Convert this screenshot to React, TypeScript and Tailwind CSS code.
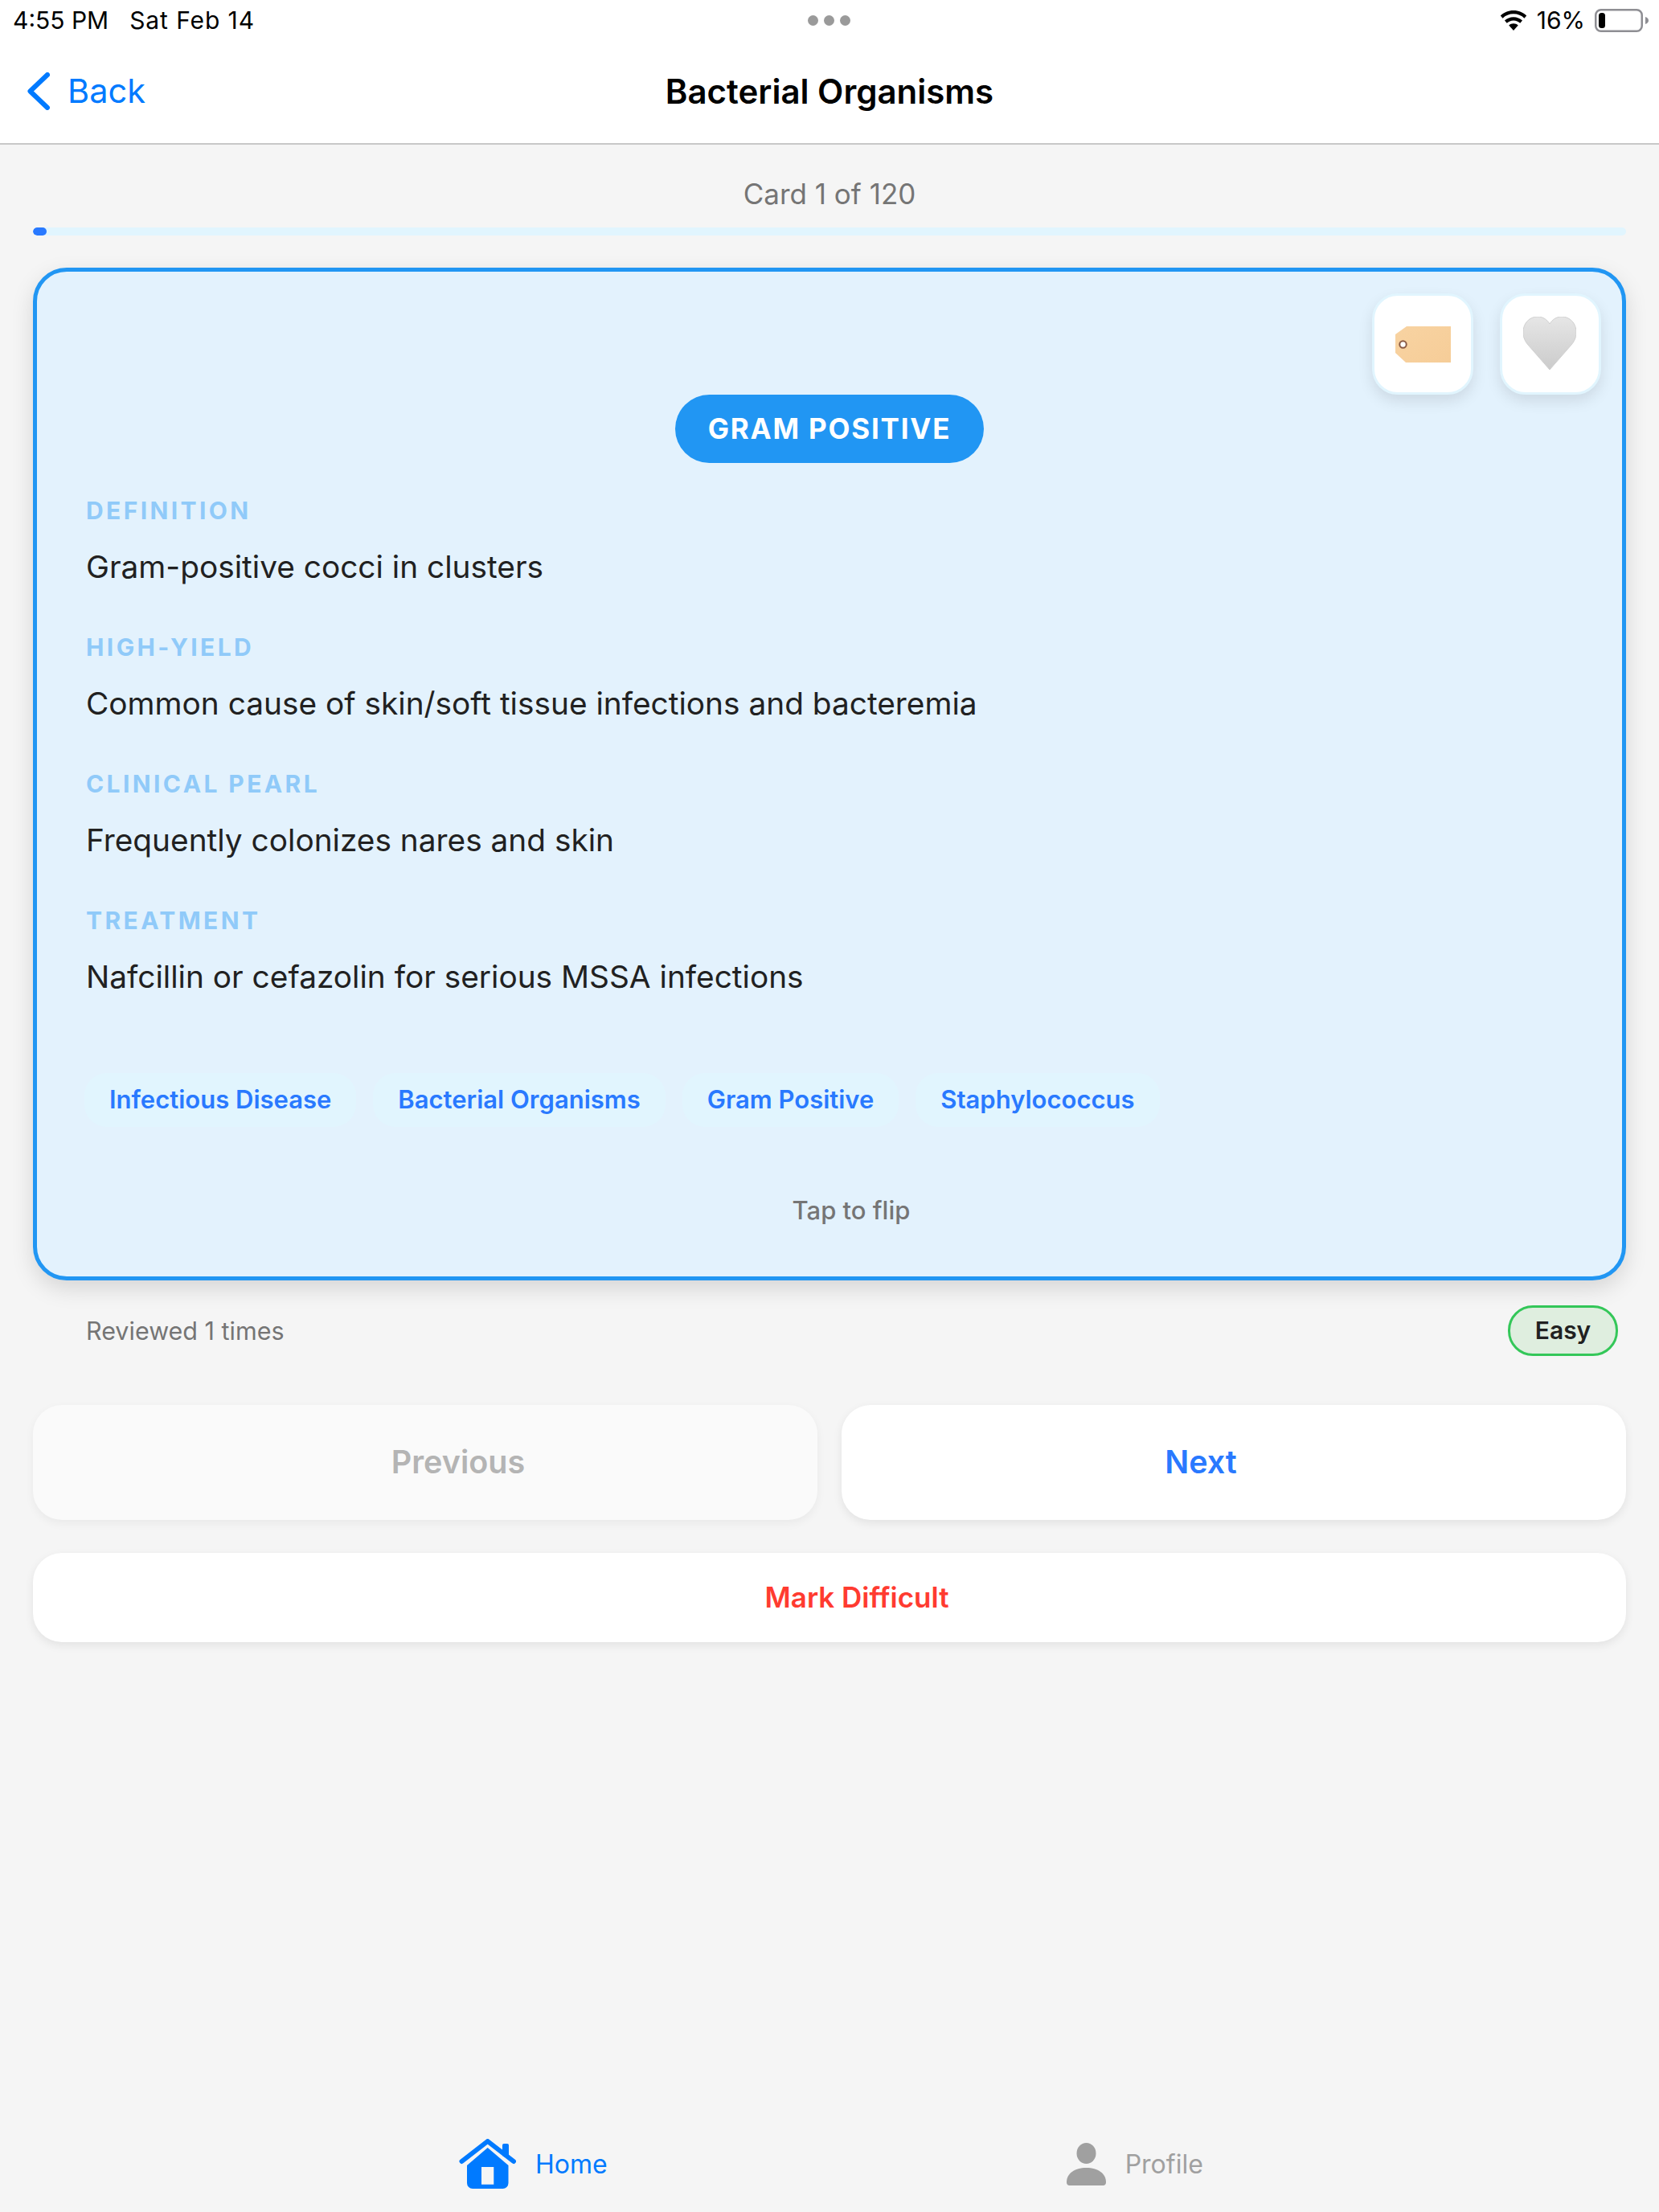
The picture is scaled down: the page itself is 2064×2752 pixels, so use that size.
function Chevron() {
  return (
    <svg width="28" height="47" viewBox="0 0 28 47" fill="none">
      <path d="M25 3 L3.500 23.500 L25 44" stroke="#007aff" strokeWidth="6" strokeLinecap="round" strokeLinejoin="round" />
    </svg>
  );
}

function Wifi() {
  return (
    <svg width="34" height="25" viewBox="0 0 36 27" fill="#000">
      <path d="M18 0C11 0 5 2.700 0.500 7l3 3.400C7.200 6.800 12.300 4.600 18 4.600s10.800 2.200 14.500 5.800l3-3.400C31 2.700 25 0 18 0z" />
      <path d="M18 8.800c-4.600 0-8.800 1.800-11.900 4.700l3 3.400c2.300-2.100 5.500-3.500 8.900-3.500s6.600 1.400 8.900 3.500l3-3.400C26.800 10.600 22.600 8.800 18 8.800z" />
      <path d="M18 17.500c-2.400 0-4.600 0.900-6.200 2.400L18 27l6.200-7.100c-1.600-1.500-3.800-2.400-6.200-2.400z" />
    </svg>
  );
}

function Battery() {
  return (
    <svg width="67" height="29" viewBox="0 0 67 29" fill="none">
      <rect x="1.250" y="1.250" width="57.500" height="26.500" rx="6.500" stroke="#8e8e93" strokeWidth="2.500" />
      <rect x="5" y="5" width="8" height="19" rx="3.500" fill="#000" />
      <path d="M63 10c2.500 0.800 4 2.500 4 4.500s-1.500 3.700-4 4.500z" fill="#8e8e93" />
    </svg>
  );
}

function TagIcon() {
  return (
    <svg width="69" height="45" viewBox="0 0 69 45">
      <defs>
        <linearGradient id="tagFill" x1="0" y1="0" x2="1" y2="1">
          <stop offset="0" stopColor="#f8d3a2" />
          <stop offset="1" stopColor="#f6cd98" />
        </linearGradient>
      </defs>
      <path d="M14 0H69V45H13L0 33V10z" fill="url(#tagFill)" />
      <circle cx="9.500" cy="22.500" r="4.200" fill="#fff" stroke="#8a5a44" strokeWidth="2" />
    </svg>
  );
}

function HeartIcon() {
  return (
    <svg width="66" height="66" viewBox="0 0 66 66">
      <defs>
        <linearGradient id="heartFill" x1="0" y1="0" x2="0" y2="1">
          <stop offset="0" stopColor="#e6e6e6" />
          <stop offset="1" stopColor="#cbcbcb" />
        </linearGradient>
      </defs>
      <path
        d="M33 66 L6 35 C1 29 0 24 0 19 C0 8 8 0 18 0 C25 0 30 4 33 9 C36 4 41 0 48 0 C58 0 66 8 66 19 C66 24 65 29 60 35 Z"
        fill="url(#heartFill)"
        stroke="#d0d0d0"
        strokeWidth="1"
      />
    </svg>
  );
}

function HomeIcon() {
  return (
    <svg width="71" height="63" viewBox="11 9 71 63">
      <path d="M14.500 37 L46.700 12 L79 37" fill="none" stroke="#007aff" strokeWidth="6" strokeLinecap="round" strokeLinejoin="round" />
      <path d="M65 30V17a2 2 0 0 1 2-2h4a2 2 0 0 1 2 2V34z" fill="#007aff" />
      <path
        fillRule="evenodd"
        fill="#007aff"
        d="M46.700 20 L21 42 V64 a7 7 0 0 0 7 7 H65.500 a7 7 0 0 0 7-7 V42 Z M39 44 V65.700 H54.300 V44 Z"
      />
    </svg>
  );
}

function ProfileIcon() {
  return (
    <svg width="49" height="53" viewBox="0 0 49 53" fill="#a0a0a0">
      <ellipse cx="24.500" cy="13" rx="12" ry="13" />
      <path d="M0 49C0 38 10 31 24.500 31S49 38 49 49c0 2.500-1.500 4-3.500 4h-42C1.500 53 0 51.500 0 49z" />
    </svg>
  );
}

function Field({ label, value }: { label: string; value: string }) {
  return (
    <div className="h-[170px]">
      <div className="h-[40px] text-[30px] leading-[40px] font-bold tracking-[3.4px] text-[#90caf9]">{label}</div>
      <div className="mt-[20px] h-[60px] text-[38.800px] leading-[60px] text-[#212121]">{value}</div>
    </div>
  );
}

function Chip({ text }: { text: string }) {
  return (
    <div className="flex h-[67px] items-center rounded-[28px] bg-[#e1f5fe] px-[31px] text-[31px] font-semibold text-[#2979ff]">
      {text}
    </div>
  );
}

export default function App() {
  return (
    <div className="flex h-[2752px] w-[2064px] flex-col overflow-hidden bg-[#f5f5f5] font-['Inter',sans-serif]">
      <header className="h-[180px] shrink-0 border-b-2 border-[#c8c8c8] bg-white">
        <div className="relative flex h-[50px] items-center justify-between pl-[16px] pr-[13px] text-[30px] text-black">
          <div className="flex gap-[26px]">
            <span>4:55 PM</span>
            <span className="tracking-[0.9px]">Sat Feb 14</span>
          </div>
          <div className="absolute left-[1005px] top-[19px] flex gap-[7px]">
            <span className="h-[13px] w-[13px] rounded-full bg-[#9a9a9a]" />
            <span className="h-[13px] w-[13px] rounded-full bg-[#9a9a9a]" />
            <span className="h-[13px] w-[13px] rounded-full bg-[#9a9a9a]" />
          </div>
          <div className="flex items-center gap-[12px]">
            <Wifi />
            <span>16%</span>
            <Battery />
          </div>
        </div>
        <div className="grid h-[128px] grid-cols-[1fr_auto_1fr] items-center pb-[2px]">
          <div className="flex items-center gap-[22px] pl-[34px] text-[41.500px] text-[#007aff]">
            <Chevron />
            <span>Back</span>
          </div>
          <div className="text-[42px] font-semibold text-black">Bacterial Organisms</div>
          <div />
        </div>
      </header>

      <main className="flex flex-1 flex-col px-[41px]">
        <div className="mt-[38px] h-[46px] text-center text-[35px] leading-[46px] text-[#757575]">Card 1 of 120</div>
        <div className="mt-[19px] h-[10px] overflow-hidden rounded-[5px] bg-[#e1f5fe]">
          <div className="h-full w-[17px] rounded-[5px] bg-[#2979ff]" />
        </div>

        <section className="relative mt-[40px] h-[1260px] rounded-[42px] border-[5px] border-[#2196f3] bg-[#e3f2fd] px-[61px] pt-[153px] shadow-[0_10px_28px_rgba(0,0,0,0.13)]">
          <div className="absolute right-[26px] top-[27px] flex gap-[33px]">
            <button className="flex h-[126px] w-[126px] items-center justify-center rounded-[32px] border-[3px] border-[#e1f5fe] bg-white shadow-[0_8px_18px_rgba(0,0,0,0.1)]">
              <TagIcon />
            </button>
            <button className="flex h-[126px] w-[126px] items-center justify-center rounded-[32px] border-[3px] border-[#e1f5fe] bg-white pb-[2px] pr-[2px] shadow-[0_8px_18px_rgba(0,0,0,0.1)]">
              <HeartIcon />
            </button>
          </div>

          <div className="flex justify-center">
            <div className="flex h-[85px] w-[384px] items-center justify-center rounded-full bg-[#2196f3] text-[35px] font-bold tracking-[1.8px] text-white">
              GRAM POSITIVE
            </div>
          </div>

          <div className="mt-[39px]">
            <Field label="DEFINITION" value="Gram-positive cocci in clusters" />
            <Field label="HIGH-YIELD" value="Common cause of skin/soft tissue infections and bacteremia" />
            <Field label="CLINICAL PEARL" value="Frequently colonizes nares and skin" />
            <Field label="TREATMENT" value="Nafcillin or cefazolin for serious MSSA infections" />
          </div>

          <div className="ml-[-2px] mt-[40px] flex gap-[21px]">
            <Chip text="Infectious Disease" />
            <Chip text="Bacterial Organisms" />
            <Chip text="Gram Positive" />
            <Chip text="Staphylococcus" />
          </div>

          <div className="mt-[84px] pl-[54px] text-center text-[31px] leading-[40px] font-medium text-[#757575]">Tap to flip</div>
        </section>

        <div className="mt-[31px] flex h-[63px] items-center justify-between pl-[66px] pr-[10px]">
          <span className="text-[30.500px] text-[#757575]">Reviewed 1 times</span>
          <span className="flex h-[63px] w-[137px] items-center justify-center rounded-[31px] border-[3px] border-[#34c759] bg-[#dfeedf] text-[30px] font-semibold text-[#212121]">
            Easy
          </span>
        </div>

        <div className="mt-[61px] grid grid-cols-2 gap-[30px]">
          <button className="flex h-[143px] items-center justify-center rounded-[36px] bg-[#fafafa] pl-[82px] text-[39.500px] font-semibold text-[#b4b4b4] shadow-[0_4px_12px_rgba(0,0,0,0.05)]">
            Previous
          </button>
          <button className="flex h-[143px] items-center justify-center rounded-[36px] bg-white pr-[82px] text-[39.500px] font-semibold text-[#2979ff] shadow-[0_4px_12px_rgba(0,0,0,0.08)]">
            Next
          </button>
        </div>

        <button className="mt-[41px] flex h-[111px] items-center justify-center rounded-[36px] bg-white pl-[68px] text-[35px] font-semibold text-[#ff3b30] shadow-[0_4px_12px_rgba(0,0,0,0.08)]">
          Mark Difficult
        </button>

        <nav className="mt-auto flex h-[94px] shrink-0 items-center pb-[25px]">
          <div className="flex items-center gap-[24px] pl-[530px]">
            <HomeIcon />
            <span className="text-[32px] text-[#007aff]">Home</span>
          </div>
          <div className="ml-[571px] flex items-center gap-[24px]">
            <ProfileIcon />
            <span className="text-[32px] text-[#a0a0a0]">Profile</span>
          </div>
        </nav>
      </main>
    </div>
  );
}
